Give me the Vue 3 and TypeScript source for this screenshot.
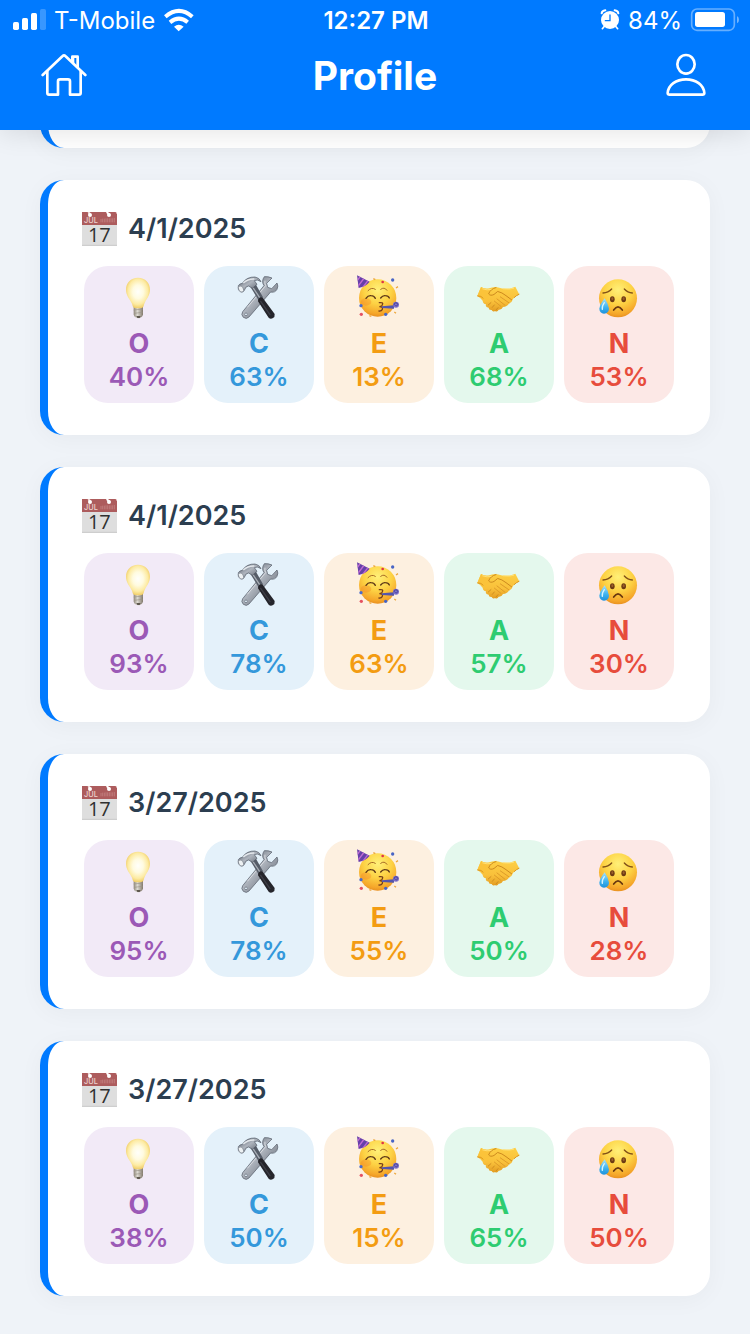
<script setup lang="ts">
interface Trait {
  key: string
  name: string
  icon: string
  viewBox: string
}

interface Result {
  date: string
  scores: number[]
}

const traits: Trait[] = [
  { key: 'O', name: 'Openness', icon: '#bulb', viewBox: '-3 0 180 168' },
  { key: 'C', name: 'Conscientiousness', icon: '#tools', viewBox: '3 0 180 168' },
  { key: 'E', name: 'Extraversion', icon: '#party', viewBox: '3 0 180 168' },
  { key: 'A', name: 'Agreeableness', icon: '#hands', viewBox: '3 0 180 168' },
  { key: 'N', name: 'Neuroticism', icon: '#sad', viewBox: '3 0 180 168' },
]

const results: Result[] = [
  { date: '4/1/2025', scores: [40, 63, 13, 68, 53] },
  { date: '4/1/2025', scores: [93, 78, 63, 57, 30] },
  { date: '3/27/2025', scores: [95, 78, 55, 50, 28] },
  { date: '3/27/2025', scores: [38, 50, 15, 65, 50] },
]
</script>

<template>
  <div class="page">
    <svg class="defs" aria-hidden="true">
      <defs>
        <radialGradient id="glow" cx="50%" cy="46%" r="55%">
          <stop offset="0" stop-color="#fffffb" />
          <stop offset="0.4" stop-color="#fffbe0" />
          <stop offset="0.75" stop-color="#fdeba3" />
          <stop offset="1" stop-color="#efca62" />
        </radialGradient>
        <linearGradient id="base" x1="0" x2="1" y1="0" y2="0">
          <stop offset="0" stop-color="#8d8577" />
          <stop offset="0.4" stop-color="#dedbd3" />
          <stop offset="1" stop-color="#82796b" />
        </linearGradient>
        <linearGradient id="steel" x1="0" x2="1" y1="0" y2="1">
          <stop offset="0" stop-color="#4d5562" />
          <stop offset="0.45" stop-color="#aeb4bd" />
          <stop offset="1" stop-color="#4c535f" />
        </linearGradient>
        <radialGradient id="face" cx="50%" cy="28%" r="75%">
          <stop offset="0" stop-color="#fff078" />
          <stop offset="0.5" stop-color="#fdd244" />
          <stop offset="0.85" stop-color="#f5a62a" />
          <stop offset="1" stop-color="#e58a1e" />
        </radialGradient>
        <linearGradient id="skin" x1="0" x2="0" y1="0" y2="1">
          <stop offset="0" stop-color="#fdcf45" />
          <stop offset="0.6" stop-color="#f9c03a" />
          <stop offset="1" stop-color="#e39c22" />
        </linearGradient>
        <linearGradient id="tear" x1="0" x2="0" y1="0" y2="1">
          <stop offset="0" stop-color="#a5e2fb" />
          <stop offset="0.6" stop-color="#3db1ee" />
          <stop offset="1" stop-color="#1e92dc" />
        </linearGradient>
        <clipPath id="hat"><path d="M27 16 65 35 Q54 49 32 54Z" /></clipPath>

        <g id="bulb">
          <path d="M71 110h28v24q-2 7-8 9-6 3-12 0-6-2-8-9z" fill="url(#base)" />
          <path d="M71 120l28-3M72 130l26-3" stroke="#9a9387" stroke-width="2" />
          <path d="M79 138h13l-3 6h-7z" fill="#5e574e" />
          <path d="M84 23C62 23 48 39 48 59c0 18 11 27 18 42 2 5 2 10 6 12q12 4 25 0c4-2 4-7 6-12 6-15 17-24 17-42 0-20-14-36-36-36z" fill="url(#glow)" />
        </g>

        <g id="tools">
          <path d="M109 20q-10 14-1 27L44 125q-6 9 2 17 9 7 17-1l65-75q13 3 19-8 5-10 0-19l-16 17-12-4-3-12 16-16q-12-5-23-4z" fill="url(#steel)" stroke="#505864" stroke-width="2" />
          <path d="M111 32q-2 8 2 15L58 112" fill="none" stroke="#d9dce1" stroke-width="3" />
          <circle cx="54" cy="133" r="4" fill="#e4f1fa" stroke="#646b77" stroke-width="2" />
          <path d="M67 50l14-11 24 43-12 11z" fill="#565d68" />
          <path d="M73 50l22 33" stroke="#a9afb7" stroke-width="4" />
          <path d="M31 47q3-6 12-7 13-20 38-19 13 2 18 14-11-8-20-3l8 11-14 12-11-7q-9 1-11 9-4 12-14 8-9-5-6-18z" fill="url(#steel)" stroke="#505864" stroke-width="2" />
          <path d="M46 39q14-13 33-12" fill="none" stroke="#e3e7eb" stroke-width="4" />
          <ellipse cx="39" cy="57" rx="7" ry="10" transform="rotate(-30 39 57)" fill="#edf1f3" stroke="#737b86" stroke-width="2" />
          <path d="M91 88q5-9 13-5l36 49q1 9-5 12-7 5-13-1L90 94z" fill="#25252b" />
          <path d="M98 94l28 40" stroke="#3d3e46" stroke-width="4" stroke-linecap="round" />
        </g>

        <g id="party">
          <circle cx="89" cy="84" r="56" fill="url(#face)" />
          <ellipse cx="54" cy="96" rx="16" ry="11" fill="#f48122" opacity="0.35" />
          <path d="M27 16 65 35 Q54 49 32 54Z" fill="#6540a9" />
          <path clip-path="url(#hat)" d="M24 37l17-23M27 53l26-35M39 59l26-34" stroke="#c06ad2" stroke-width="4" />
          <path d="M60 62q11-12 22-4M98 58q11-9 19 3" fill="none" stroke="#a86c25" stroke-width="3" stroke-linecap="round" />
          <path d="M54 85q6-9 15-8 9 0 13 8M98 84q6-8 14-7 9 0 12 7" fill="none" stroke="#5c3616" stroke-width="4" stroke-linecap="round" />
          <path d="M94 98q15-2 8 8-3 4-8 4 12 0 9 8-3 6-10 5" fill="none" stroke="#773f1b" stroke-width="4" stroke-linecap="round" />
          <path d="M102 109l36-3v10l-36-2z" fill="#5355ad" />
          <circle cx="144" cy="104" r="9" fill="#7d70ca" />
          <path d="M138 106q1-10 9-7 5 5-1 9-3 1-4-2" fill="none" stroke="#4a4499" stroke-width="3" />
          <circle cx="134" cy="30" r="5" fill="#4865c5" />
          <circle cx="104" cy="36" r="4" fill="#df3447" />
          <circle cx="39" cy="107" r="5" fill="#4b6bca" />
          <circle cx="40" cy="133" r="5" fill="#e55161" />
          <circle cx="113" cy="133" r="5" fill="#4664c5" />
          <path d="M76 26l6 3M144 54l6-4M64 137l6 2M139 126l5 4" stroke="#eda73f" stroke-width="4" />
        </g>

        <g id="hands" transform="translate(0 5) scale(1 0.9)">
          <path d="M39 51q15 10 30 3 12-5 22-1 16 6 36 3l15-6 12 26q-12 4-19 15-2 10-12 15-6 11-18 12-4 10-13 9-4 9-11 4-7 5-10-3-9 1-9-8-11-1-8-11-9-1-10-12-5-9-16-16z" fill="url(#skin)" />
          <path d="M28 81l11-30q14 10 30 4l-11 41q-13-7-15-10-6-6-15-5z" fill="#fbc33a" />
          <path d="M84 53q-17 5-22 21 5 8 16 2l11-10q13 3 25 14l17 14" fill="none" stroke="#c9861b" stroke-width="3" stroke-linecap="round" />
          <path d="M97 84l26 20M87 91l24 21M79 98l20 18" fill="none" stroke="#dc9a28" stroke-width="3" stroke-linecap="round" />
          <path d="M69 103l-8 8M79 111l-6 8M90 120l-6 8" fill="none" stroke="#ce8b20" stroke-width="3" stroke-linecap="round" />
          <path d="M43 57q15 6 27 2M105 57q21 3 33-2" fill="none" stroke="#ffe17a" stroke-width="3" />
          <path d="M28 81q12-1 18 8M154 75q-9 4-16 12" fill="none" stroke="#d9941f" stroke-width="3" />
        </g>

        <g id="sad">
          <circle cx="90" cy="85" r="57" fill="url(#face)" />
          <path d="M45 69q16-1 26-12M109 57q10 11 24 12" fill="none" stroke="#805018" stroke-width="4" stroke-linecap="round" />
          <ellipse cx="73" cy="88" rx="7" ry="9" fill="#6d3b14" />
          <ellipse cx="107" cy="88" rx="7" ry="9" fill="#6d3b14" />
          <ellipse cx="73" cy="86" rx="3" ry="4" fill="#9c602a" />
          <ellipse cx="107" cy="86" rx="3" ry="4" fill="#9c602a" />
          <path d="M77 120q13-19 26 0" fill="none" stroke="#69370f" stroke-width="5" stroke-linecap="round" />
          <path d="M50 85Q35 104 34 116q1 14 14 15 14-1 15-15-2-14-13-31z" fill="url(#tear)" />
          <path d="M49 98q-8 11-6 20" fill="none" stroke="#d4f4ff" stroke-width="4" stroke-linecap="round" />
        </g>

        <g id="calendar">
          <path d="M24 36h105v102H24z" fill="#dedede" />
          <path d="M24 134h105v4H24z" fill="#cecece" />
          <path d="M24 36h105v39H24z" fill="#ad5c5d" />
          <path d="M81 67v-10m5 10V56m5 11V56m5 11V55m5 12V55m5 12V55m5 12V55m5 12V55m5 12V54" stroke="#bf7b7b" stroke-width="3" />
          <path d="M43 36l5 6M127 36l7 7" stroke="#f2d7d6" stroke-width="6" />
          <circle cx="48" cy="45" r="6" fill="#fff" />
          <path d="M98 36l8 8" stroke="#fff" stroke-width="6" />
          <circle cx="105" cy="45" r="6" fill="#fff" />
          <text class="month" x="30" y="69">JUL</text>
          <text class="day" x="76" y="127" text-anchor="middle">17</text>
        </g>
      </defs>
    </svg>

    <header class="header">
      <div class="status">
        <div class="side">
          <svg class="signal" viewBox="36 27 102 72" aria-hidden="true" fill="#fff">
            <rect x="39" y="66" width="18" height="24" rx="5" />
            <rect x="66" y="54" width="18" height="36" rx="5" />
            <rect x="93" y="39" width="18" height="51" rx="5" />
            <rect x="120" y="27" width="18" height="63" rx="5" opacity="0.22" />
          </svg>
          <span class="carrier">T-Mobile</span>
          <svg class="wifi" viewBox="488 27 96 72" aria-hidden="true">
            <path d="M495 50q41-35 81 0M509 67q27-22 53 0" fill="none" stroke="#fff" stroke-width="12" />
            <path d="M521 80q14-11 29 0l-15 14z" fill="#fff" />
          </svg>
        </div>
        <time class="time">12:27 PM</time>
        <div class="side end">
          <svg class="alarm" viewBox="153 27 60 72" aria-hidden="true">
            <circle cx="183" cy="60" r="27" fill="#fff" />
            <path d="M158 40q1-8 11-9M208 40q-1-8-11-9" fill="none" stroke="#fff" stroke-width="6" stroke-linecap="round" />
            <path d="M165 80l-5 6M201 80l5 6" stroke="#fff" stroke-width="5" stroke-linecap="round" />
            <path d="M183 45v17h-14" fill="none" stroke="#007aff" stroke-width="4" stroke-linecap="round" />
          </svg>
          <span class="charge">84%</span>
          <svg class="battery" viewBox="420 27 150 72" aria-hidden="true">
            <rect x="425" y="27" width="128" height="64" rx="16" fill="none" stroke="#fff" stroke-opacity="0.4" stroke-width="5" />
            <rect x="435" y="36" width="90" height="45" rx="8" fill="#fff" />
            <path d="M561 48q6 3 6 11t-6 11z" fill="#fff" opacity="0.45" />
          </svg>
        </div>
      </div>
      <nav class="nav">
        <button type="button" class="nav-button" aria-label="Home">
          <svg viewBox="120 159 144 138" fill="none" stroke="#fff" stroke-width="8" stroke-linecap="round" stroke-linejoin="round">
            <path d="M128 225l60-57q4-4 8 0l60 57" />
            <path d="M142 214v65q0 5 5 5h27v-40q0-6 6-6h24q6 0 6 6v40h27q5 0 5-5v-65" />
            <path d="M217 184v-14h16v31" />
            <path d="M219 172v15" />
          </svg>
        </button>
        <h1 class="title">Profile</h1>
        <button type="button" class="nav-button" aria-label="Profile">
          <svg viewBox="336 159 144 138" fill="none" stroke="#fff" stroke-width="8" stroke-linejoin="round">
            <ellipse cx="408" cy="193" rx="26" ry="28" />
            <path d="M359 284q-6 0-6-5c2-24 25-41 55-41s53 17 55 41q0 5-6 5z" />
          </svg>
        </button>
      </nav>
    </header>

    <main class="list">
      <div class="card previous" aria-hidden="true"></div>
      <article v-for="(result, i) in results" :key="i" class="card">
        <h2 class="date">
          <svg class="calendar" viewBox="24 36 105 102" aria-hidden="true"><use href="#calendar" /></svg>
          <span>{{ result.date }}</span>
        </h2>
        <ul class="traits">
          <li v-for="(trait, t) in traits" :key="trait.key" class="trait" :class="trait.key.toLowerCase()">
            <svg class="emoji" :viewBox="trait.viewBox" role="img" :aria-label="trait.name"><use :href="trait.icon" /></svg>
            <span class="letter">{{ trait.key }}</span>
            <span class="score">{{ result.scores[t] }}%</span>
          </li>
        </ul>
      </article>
    </main>
  </div>
</template>

<style>
body {
  background: #eff3f8;
}
</style>

<style scoped>
.page {
  min-height: 100vh;
  font-family: Inter, "Liberation Sans", sans-serif;
  background: #eff3f8;
}
.defs {
  position: absolute;
  width: 0;
  height: 0;
}
.header {
  position: sticky;
  top: 0;
  z-index: 1;
  padding-bottom: 20px;
  color: #fff;
  background: #007aff;
  box-shadow: 0 4px 24px rgba(0, 0, 0, 0.1);
}
.status {
  display: grid;
  grid-template-columns: 1fr auto 1fr;
  align-items: center;
  height: 42px;
  padding: 0 10px 0 12px;
  font-size: 24px;
  line-height: 42px;
}
.status svg {
  overflow: visible;
}
.side {
  display: flex;
  align-items: center;
  gap: 8px;
}
.end {
  justify-content: flex-end;
}
.time {
  font-weight: 600;
}
.signal {
  width: 34px;
  height: 24px;
}
.wifi {
  width: 32px;
  height: 24px;
}
.alarm {
  width: 20px;
  height: 24px;
}
.battery {
  width: 50px;
  height: 24px;
}
.nav {
  display: flex;
  align-items: center;
  justify-content: space-between;
  height: 68px;
  padding: 0 40px;
}
.nav-button {
  width: 48px;
  height: 46px;
  padding: 0;
  border: 0;
  background: none;
  cursor: pointer;
}
.nav-button svg {
  display: block;
  width: 48px;
  height: 46px;
}
.title {
  margin: 0;
  font-size: 39px;
  font-weight: 700;
  line-height: 48px;
}
.list {
  display: flex;
  flex-direction: column;
  gap: 32px;
  padding: 0 40px 36px;
}
.card {
  padding: 32px;
  border-left: 8px solid #007aff;
  border-radius: 24px;
  background: #fff;
  box-shadow: 0 4px 24px rgba(0, 0, 0, 0.04);
}
.previous {
  margin-top: -46px;
}
.date {
  display: flex;
  align-items: center;
  gap: 11px;
  margin: 0 0 20px;
  padding-left: 2px;
  color: #2c3e50;
  font-size: 27px;
  font-weight: 600;
  line-height: 34px;
}
.calendar {
  width: 35px;
  height: 34px;
}
.month {
  fill: #ecd2d0;
  font: 500 22px Inter, sans-serif;
}
.day {
  fill: #303030;
  font: 500 60px "Open Sans", sans-serif;
}
.traits {
  display: grid;
  grid-template-columns: repeat(5, 1fr);
  gap: 10px;
  margin: 0;
  padding: 0 4px;
  list-style: none;
}
.trait {
  display: flex;
  flex-direction: column;
  align-items: center;
  padding: 4px 0 11px;
  border-radius: 24px;
}
.emoji {
  width: 60px;
  height: 56px;
}
.letter {
  font-size: 27px;
  font-weight: 700;
  line-height: 36px;
}
.score {
  font-size: 26px;
  font-weight: 600;
  line-height: 30px;
}
.o {
  color: #9b59b6;
  background: #f2eaf7;
}
.c {
  color: #3498db;
  background: #e4f1fa;
}
.e {
  color: #f39c12;
  background: #fdf0e0;
}
.a {
  color: #2ecc71;
  background: #e4f8ed;
}
.n {
  color: #e74c3c;
  background: #fce8e6;
}
</style>
